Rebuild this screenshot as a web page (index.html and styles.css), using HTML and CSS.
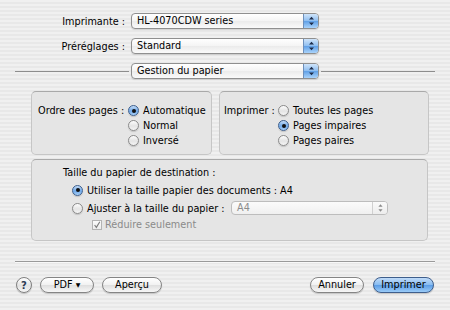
FILE: index.html
```html
<!DOCTYPE html>
<html lang="fr">
<head>
    <meta charset="UTF-8">
    <meta name="viewport" content="width=device-width, initial-scale=1.0">
    <title>Imprimer</title>
    <link rel="stylesheet" href="styles.css">
</head>
<body>

    <div class="dialog">

        <div class="field-row">
            <span class="field-label">Imprimante :</span>
            <div class="popup">
                <span class="popup-text">HL-4070CDW series</span>
                <span class="popup-arrows"><svg width="7" height="10" viewBox="0 0 7 10"><path d="M3.5 0.8 L6 3.6 H1 Z M3.5 9.2 L6 6.4 H1 Z" fill="#1c2b48"/></svg></span>
            </div>
        </div>

        <div class="field-row">
            <span class="field-label">Préréglages :</span>
            <div class="popup">
                <span class="popup-text">Standard</span>
                <span class="popup-arrows"><svg width="7" height="10" viewBox="0 0 7 10"><path d="M3.5 0.8 L6 3.6 H1 Z M3.5 9.2 L6 6.4 H1 Z" fill="#1c2b48"/></svg></span>
            </div>
        </div>

        <div class="pane-row">
            <span class="pane-line left"></span>
            <div class="popup">
                <span class="popup-text">Gestion du papier</span>
                <span class="popup-arrows"><svg width="7" height="10" viewBox="0 0 7 10"><path d="M3.5 0.8 L6 3.6 H1 Z M3.5 9.2 L6 6.4 H1 Z" fill="#1c2b48"/></svg></span>
            </div>
            <span class="pane-line right"></span>
        </div>

        <div class="panels">
            <div class="group order">
                <span class="group-label">Ordre des pages :</span>
                <div class="options">
                    <div class="opt"><span class="radio on"></span>Automatique</div>
                    <div class="opt"><span class="radio"></span>Normal</div>
                    <div class="opt"><span class="radio"></span>Inversé</div>
                </div>
            </div>
            <div class="group pages">
                <span class="group-label">Imprimer :</span>
                <div class="options">
                    <div class="opt"><span class="radio"></span>Toutes les pages</div>
                    <div class="opt"><span class="radio on"></span>Pages impaires</div>
                    <div class="opt"><span class="radio"></span>Pages paires</div>
                </div>
            </div>
        </div>

        <div class="group dest">
            <div class="dest-title">Taille du papier de destination :</div>
            <div class="opt use-doc"><span class="radio on"></span>Utiliser la taille papier des documents : A4</div>
            <div class="opt fit">
                <span class="radio"></span>
                <span class="fit-label">Ajuster à la taille du papier :</span>
                <div class="popup small disabled">
                    <span class="popup-text">A4</span>
                    <span class="popup-arrows"><svg width="7" height="10" viewBox="0 0 7 10"><path d="M3.5 1.2 L5.6 3.8 H1.4 Z M3.5 8.8 L5.6 6.2 H1.4 Z" fill="#8a8a8a"/></svg></span>
                </div>
            </div>
            <div class="opt shrink">
                <span class="check"><svg width="10" height="10" viewBox="0 0 10 10"><path d="M2 5 L4.2 8 L8.5 1" fill="none" stroke="#7d7d7d" stroke-width="1.4"/></svg></span>
                Réduire seulement
            </div>
        </div>

        <div class="sep"></div>

        <div class="buttons">
            <span class="help">?</span>
            <button class="btn pdf">PDF <span class="tri">▼</span></button>
            <button class="btn preview">Aperçu</button>
            <span class="spacer"></span>
            <button class="btn cancel">Annuler</button>
            <button class="btn print">Imprimer</button>
        </div>

    </div>

</body>
</html>
```

FILE: styles.css
```css
*{
    margin: 0;
    padding: 0;
    box-sizing: border-box;
}

body{
    width: 450px;
    height: 310px;
    overflow: hidden;
    background: repeating-linear-gradient(to bottom, #f0f0f0 0, #f0f0f0 2px, #e8e8e8 2px, #e8e8e8 4px);
    font-family: "DejaVu Sans", sans-serif;
    font-size: 9.7px;
    color: #000;
}

.dialog{
    padding: 13px 15px 0 15px;
}

/* top popups */

.field-row{
    display: flex;
    align-items: center;
    height: 16px;
    margin-bottom: 9px;
}

.field-label{
    width: 116px;
    padding-right: 6px;
    text-align: right;
}

.popup{
    display: flex;
    width: 188px;
    height: 16px;
    border: 1px solid #8f8f8f;
    border-radius: 4px;
    background: linear-gradient(#ffffff, #f4f4f4 50%, #ebebeb 51%, #fafafa);
    overflow: hidden;
    box-shadow: 0 1px 1px rgba(0,0,0,0.12);
}

.popup-text{
    flex: 1;
    padding-left: 5px;
    line-height: 14px;
    white-space: nowrap;
}

.popup-arrows{
    display: flex;
    align-items: center;
    justify-content: center;
    width: 15px;
    border-left: 1px solid #6d8fbb;
    background: linear-gradient(#cfe4fa, #8dbdf0 50%, #5f9fe6 51%, #a9d3fb);
}

.pane-row{
    display: flex;
    align-items: center;
    height: 16px;
}

.pane-line{
    height: 1px;
    background-color: #8d8d8d;
}

.pane-line.left{
    width: 114px;
    margin-right: 2px;
}

.pane-line.right{
    flex: 1;
    margin-left: 2px;
}

/* group boxes */

.panels{
    display: flex;
    gap: 7px;
    margin-top: 12px;
    padding-left: 16px;
    height: 64px;
}

.group{
    background-color: #e5e5e5;
    border: 1px solid #c6c6c6;
    border-top-color: #a9a9a9;
    border-radius: 5px;
}

.order,
.pages{
    display: flex;
    padding-top: 11px;
}

.order{
    width: 181px;
    padding-left: 6px;
}

.pages{
    width: 210px;
    padding-left: 4px;
}

.group-label{
    line-height: 15px;
}

.order .group-label{
    width: 90px;
}

.pages .group-label{
    width: 54px;
}

.opt{
    display: flex;
    align-items: center;
    height: 15px;
    gap: 4px;
    white-space: nowrap;
}

.radio{
    position: relative;
    width: 11px;
    height: 11px;
    flex: none;
    border: 1px solid #8a8a8a;
    border-radius: 50%;
    background: linear-gradient(#fdfdfd, #e4e4e4 55%, #f5f5f5);
    box-shadow: 0 1px 1px rgba(0,0,0,0.15);
}

.radio.on{
    border-color: #3d5f8d;
    background: linear-gradient(#c4dcf6, #6fa8e8 55%, #a7cff7);
}

.radio.on::after{
    content: "";
    position: absolute;
    left: 2.5px;
    top: 2.5px;
    width: 4px;
    height: 4px;
    border-radius: 50%;
    background-color: #111;
}

.dest{
    height: 82px;
    margin: 4px 7px 0 16px;
    padding: 5px 0 0 31px;
}

.dest-title{
    line-height: 15px;
}

.use-doc{
    margin: 3px 0 0 9px;
    height: 14px;
}

.fit{
    margin: 4px 0 0 9px;
    height: 14px;
}

.fit-label{
    width: 144px;
}

.popup.small{
    width: 157px;
    height: 14px;
    margin-left: -4px;
}

.popup.small .popup-text{
    line-height: 12px;
}

.popup.disabled{
    border-color: #bdbdbd;
    background: linear-gradient(#fbfbfb, #f0f0f0);
    color: #8c8c8c;
    box-shadow: none;
}

.popup.disabled .popup-arrows{
    border-left-color: #d0d0d0;
    background: linear-gradient(#fafafa, #ededed);
}

.shrink{
    margin: 2px 0 0 29px;
    color: #8a8a8a;
    gap: 3px;
}

.check{
    display: flex;
    width: 10px;
    height: 10px;
    border: 1px solid #b3b3b3;
    background: linear-gradient(#fbfbfb, #ececec);
}

.check svg{
    margin: -1px 0 0 0;
}

/* bottom */

.sep{
    margin-top: 20px;
    height: 1px;
    background-color: #9a9a9a;
    box-shadow: 0 1px 0 #f8f8f8;
}

.buttons{
    display: flex;
    align-items: center;
    height: 16px;
    margin-top: 15px;
}

.spacer{
    flex: 1;
}

.help{
    display: flex;
    align-items: center;
    justify-content: center;
    width: 16px;
    height: 16px;
    margin-left: 1px;
    border: 1px solid #7f7f7f;
    border-radius: 50%;
    background: linear-gradient(#ffffff, #e2e2e2 55%, #f6f6f6);
    font-weight: bold;
    font-size: 10px;
    color: #2c3a54;
    box-shadow: 0 1px 1px rgba(0,0,0,0.2);
}

.btn{
    height: 16px;
    border: 1px solid #858585;
    border-radius: 8px;
    background: linear-gradient(#ffffff, #f1f1f1 50%, #dedede 51%, #f7f7f7);
    font-family: "DejaVu Sans", sans-serif;
    font-size: 9.7px;
    color: #000;
    line-height: 14px;
    box-shadow: 0 1px 1px rgba(0,0,0,0.18);
}

.pdf{
    width: 54px;
    margin-left: 8px;
}

.tri{
    font-size: 6px;
    vertical-align: 1px;
}

.preview{
    width: 60px;
    margin-left: 8px;
}

.cancel{
    width: 54px;
}

.print{
    width: 61px;
    margin-left: 9px;
    margin-right: 1px;
    border-color: #3e5e8c;
    background: linear-gradient(#c0dbf8, #86bbf1 50%, #5a9ce6 51%, #9acbf7);
}
```
